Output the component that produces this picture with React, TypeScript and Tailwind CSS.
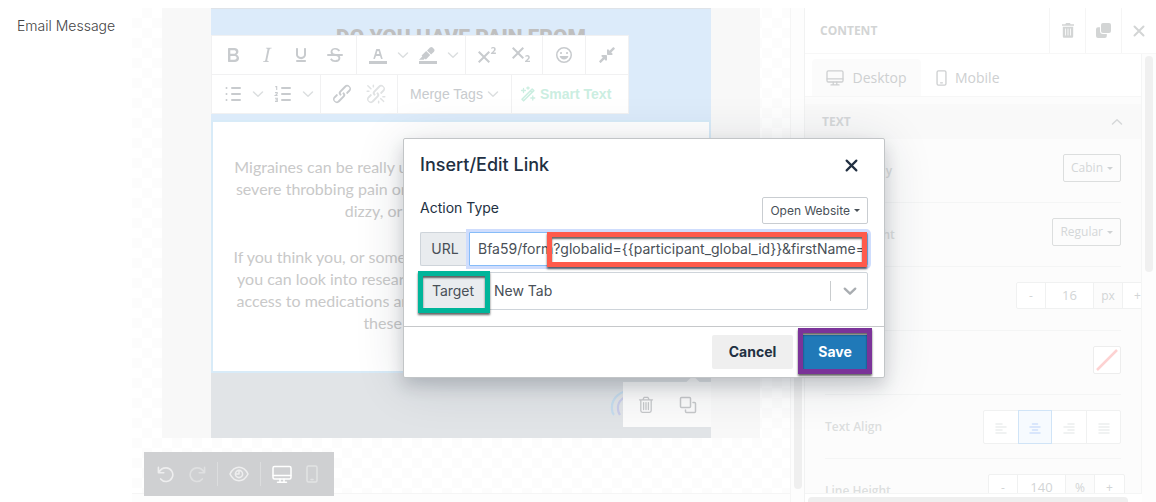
import React from "react";
import { FaCompressAlt } from "react-icons/fa";

type IconProps = { className?: string };

function Glyph({ d, className = "size-6" }: { d: string[]; className?: string }) {
  return (
    <svg viewBox="0 0 24 24" className={className} fill="currentColor" fillRule="evenodd" aria-hidden="true">
      {d.map((path) => (
        <path key={path} d={path} />
      ))}
    </svg>
  );
}

function Stroke({
  children,
  className = "size-6",
  box = "0 0 24 24",
  width = 1.5,
}: {
  children: React.ReactNode;
  className?: string;
  box?: string;
  width?: number;
}) {
  return (
    <svg
      viewBox={box}
      className={className}
      fill="none"
      stroke="currentColor"
      strokeWidth={width}
      strokeLinecap="round"
      strokeLinejoin="round"
      aria-hidden="true"
    >
      {children}
    </svg>
  );
}

const LINK_PATH =
  "M6.2 12.3a1 1 0 0 1 1.4 1.4l-2 2a2 2 0 1 0 2.6 2.8l4.8-4.8a1 1 0 0 0 0-1.4 1 1 0 1 1 1.4-1.3 2.9 2.9 0 0 1 0 4L9.6 20a3.9 3.9 0 0 1-5.5-5.5l2-2Zm11.6-.6a1 1 0 0 1-1.4-1.4l2-2a2 2 0 1 0-2.6-2.8L11 10.3a1 1 0 0 0 0 1.4A1 1 0 1 1 9.6 13a2.9 2.9 0 0 1 0-4L14.4 4a3.9 3.9 0 0 1 5.5 5.5l-2 2Z";

const GLYPHS = {
  bold: [
    "M7.8 19c-.3 0-.5 0-.6-.2l-.2-.5V5.7c0-.2 0-.4.2-.5l.6-.2h5c1.5 0 2.7.3 3.5 1 .7.6 1.1 1.4 1.1 2.5a3 3 0 0 1-.6 1.9c-.4.6-1 1-1.6 1.2.4.1.9.3 1.3.6s.8.7 1 1.2c.4.4.5 1 .5 1.6 0 1.3-.4 2.3-1.3 3-.8.7-2.1 1-3.8 1H7.8Zm5-8.3c.6 0 1.2-.1 1.6-.5.4-.3.6-.7.6-1.3 0-1.1-.8-1.7-2.3-1.7H9.3v3.5h3.4Zm.5 6c.7 0 1.3-.1 1.7-.4.4-.4.6-.9.6-1.5s-.2-1-.7-1.4c-.4-.3-1-.4-2-.4H9.4v3.8h4Z",
  ],
  italic: [
    "m16.7 4.7-.1.9h-.3c-.6 0-1 0-1.4.3-.3.3-.4.6-.5 1.1l-2.1 9.8v.6c0 .5.4.8 1.4.8h.2l-.2.8H8l.2-.8h.2c1.1 0 1.8-.5 2-1.5l2-9.8.1-.5c0-.6-.4-.8-1.4-.8h-.3l.2-.9h5.8Z",
  ],
  underline: [
    "M16 5c.6 0 1 .4 1 1v5.5a4 4 0 0 1-.4 1.8l-1 1.4a5.3 5.3 0 0 1-5.5 1 5 5 0 0 1-1.6-1c-.5-.4-.8-.9-1.1-1.4a4 4 0 0 1-.4-1.8V6c0-.6.4-1 1-1s1 .4 1 1v5.5c0 .3 0 .6.2 1l.6.7a3.3 3.3 0 0 0 2.2.8 3.4 3.4 0 0 0 2.2-.8c.3-.2.4-.5.6-.8l.2-.9V6c0-.6.4-1 1-1ZM8 17h8c.6 0 1 .4 1 1s-.4 1-1 1H8a1 1 0 0 1 0-2Z",
  ],
  strike: [
    "M15.6 8.5c-.5-.7-1-1.1-1.3-1.3-.6-.4-1.3-.6-2-.6-2.7 0-2.8 1.7-2.8 2.1 0 1.6 1.8 2 3.2 2.3 4.4.9 4.6 2.8 4.6 3.9 0 1.4-.7 4.1-5 4.1A6.2 6.2 0 0 1 7 16.4l1.5-1.1c.4.6 1.6 2 3.7 2 1.6 0 2.5-.4 3-1.2.4-.8.3-2-.8-2.6-.7-.4-1.6-.7-2.9-1-1-.2-3.9-.8-3.9-3.6C7.6 6 10.3 5 12.4 5c2.9 0 4.2 1.6 4.7 2.4l-1.5 1.1Z",
    "M5 11h14a1 1 0 0 1 0 2H5a1 1 0 0 1 0-2Z",
  ],
  textColor: [
    "M3 18h18v3H3z",
    "M8.7 16h-.8a.5.5 0 0 1-.5-.6l2.7-9c.1-.3.3-.4.5-.4h2.8c.2 0 .4.1.5.4l2.7 9a.5.5 0 0 1-.5.6h-.8a.5.5 0 0 1-.4-.4l-.7-2.2c0-.3-.3-.4-.5-.4h-3.4c-.2 0-.4.1-.5.4l-.7 2.2c0 .3-.2.4-.4.4Zm2.6-7.6-.6 2a.5.5 0 0 0 .5.6h1.6a.5.5 0 0 0 .5-.6l-.6-2c0-.3-.3-.4-.5-.4h-.4c-.2 0-.4.1-.5.4Z",
  ],
  highlight: [
    "M3 18h18v3H3z",
    "M7.7 16.7H3l3.3-3.3-.7-.8L10.2 8l4 4.1-4 4.2c-.2.2-.6.2-.8 0l-.6-.7-1.1 1.1zm5-7.5L11 7.4l3-2.9a2 2 0 0 1 2.6 0L18 6c.7.7.7 2 0 2.7l-2.9 2.9-1.8-1.8-.5-.6",
  ],
  superscript: [
    "M15 9.4 10.4 14l4.6 4.6-1.4 1.4L9 15.4 4.4 20 3 18.6 7.6 14 3 9.4 4.4 8 9 12.6 13.6 8 15 9.4Zm5.9 1.6h-5v-1l1-.8 1.7-1.6c.3-.5.5-.9.5-1.3 0-.3 0-.5-.2-.7-.2-.2-.5-.3-.9-.3l-.8.2-.7.4-.4-1.2c.2-.2.5-.4 1-.5.3-.2.8-.2 1.2-.2.8 0 1.4.2 1.8.6.4.4.6 1 .6 1.6 0 .5-.2 1-.5 1.5l-1.3 1.4-.6.5h2.6V11Z",
  ],
  subscript: [
    "m10.4 10 4.6 4.6-1.4 1.4L9 11.4 4.4 16 3 14.6 7.6 10 3 5.4 4.4 4 9 8.6 13.6 4 15 5.4 10.4 10ZM21 19h-5v-1l1-.8 1.7-1.6c.3-.4.5-.8.5-1.2 0-.3 0-.6-.2-.7-.2-.2-.5-.3-.9-.3a2 2 0 0 0-.8.2l-.7.3-.4-1.1 1-.6 1.2-.2c.8 0 1.4.3 1.8.7.4.4.6.9.6 1.5s-.2 1.1-.5 1.6a8 8 0 0 1-1.3 1.3l-.6.6h2.6V19Z",
  ],
  emoji: [
    "M9 11c.6 0 1-.4 1-1s-.4-1-1-1a1 1 0 0 0-1 1c0 .6.4 1 1 1Zm6 0c.6 0 1-.4 1-1s-.4-1-1-1a1 1 0 0 0-1 1c0 .6.4 1 1 1Zm-3 5.5c2.1 0 4-1.5 4.4-3.5H7.6c.5 2 2.3 3.5 4.4 3.5ZM12 4a8 8 0 1 0 0 16 8 8 0 0 0 0-16Zm0 14.5a6.5 6.5 0 1 1 0-13 6.5 6.5 0 0 1 0 13Z",
  ],
  link: [LINK_PATH],
  unlink: [
    LINK_PATH,
    "M7.6 6.3a.8.8 0 0 1-1 1.1L3.3 4.2a.7.7 0 1 1 1-1l3.2 3.1ZM5.1 8.6a.8.8 0 0 1 0 1.5H3a.8.8 0 0 1 0-1.5H5Zm5-3.5a.8.8 0 0 1-1.5 0V3a.8.8 0 0 1 1.5 0V5Zm6 11.8a.8.8 0 0 1 1-1l3.2 3.2a.8.8 0 0 1-1 1L16 17Zm-2.2 2a.8.8 0 0 1 1.5 0V21a.8.8 0 0 1-1.5 0V19Zm5-3.5a.7.7 0 1 1 0-1.5H21a.8.8 0 0 1 0 1.5H19Z",
  ],
};

function Chevron({ className = "size-3" }: IconProps) {
  return (
    <Stroke box="0 0 12 12" className={className}>
      <path d="M1.5 4 6 8.3 10.5 4" />
    </Stroke>
  );
}

function BulletList() {
  return (
    <Stroke width={2}>
      <path d="M11 6h8M11 12h8M11 18h8M5.5 6h.01M5.5 12h.01M5.5 18h.01" />
    </Stroke>
  );
}

function NumberList() {
  return (
    <svg viewBox="0 0 24 24" className="size-6" fill="none" stroke="currentColor" aria-hidden="true">
      <path d="M11 6h8M11 12h8M11 18h8" strokeWidth="2" strokeLinecap="round" />
      <path d="M4.3 4.6h1.4V8M4 10.6h2.2v1.2L4.3 13.5h2.3M4 16.2h2.3v3.2H4M4.6 17.8h1.7" strokeWidth="1.1" />
    </svg>
  );
}

function Wand() {
  return (
    <Stroke box="0 0 16 16" className="size-4" width={1.6}>
      <path d="M2 13.2 12.2 3l1.6 1.6L3.6 14.8ZM10.4 4.8 12 6.4" />
      <path d="M3.5 2.5v4M1.5 4.5h4M8 .8v2.4M6.8 2h2.4M12.8 10v4M10.8 12h4" strokeWidth="1.3" />
    </Stroke>
  );
}

function TrashOutline() {
  return (
    <Stroke box="0 0 16 18" className="h-[18px] w-4" width={1.3}>
      <path d="M1.5 3.8h13M5 3.6 6 1.4h4l1 2.2M2.8 4v10.6c0 1 .6 1.7 1.6 1.7h7.2c1 0 1.6-.7 1.6-1.7V4M5.6 6.6v7M8 6.6v7M10.4 6.6v7" />
    </Stroke>
  );
}

function CopyOutline() {
  return (
    <Stroke box="0 0 18 18" className="size-[18px]" width={1.5}>
      <rect x="1.5" y="1.5" width="10" height="10" rx="1" />
      <path d="M14 6.5h1.5a1 1 0 0 1 1 1v8a1 1 0 0 1-1 1h-8a1 1 0 0 1-1-1V14" />
    </Stroke>
  );
}

function TrashSolid() {
  return (
    <svg viewBox="0 0 12 15" className="h-[15px] w-3" fill="currentColor" fillRule="evenodd" aria-hidden="true">
      <path d="M4 0h4l.6 1.2H12v1.6H0V1.2h3.4ZM.8 3.8h10.4v9.4c0 1-.6 1.6-1.6 1.6H2.4c-1 0-1.6-.6-1.6-1.6ZM3 5.6v7h.8v-7Zm2.6 0v7h.8v-7Zm2.6 0v7H9v-7Z" />
    </svg>
  );
}

function CopySolid() {
  return (
    <svg viewBox="0 0 15 15" className="size-[15px]" fill="currentColor" aria-hidden="true">
      <rect x="5" y="0" width="10" height="10" rx="2" />
      <path d="M4 4.2H2a2 2 0 0 0-2 2V13a2 2 0 0 0 2 2h6.800a2 2 0 0 0 2-2v-2H7a3 3 0 0 1-3-3Z" />
    </svg>
  );
}

function Close({ className = "size-3", width = 2 }: IconProps & { width?: number }) {
  return (
    <Stroke box="0 0 12 12" className={className} width={width}>
      <path d="m1.500 1.500 9 9M10.500 1.500l-9 9" />
    </Stroke>
  );
}

function Desktop({ className = "h-[18px] w-5" }: IconProps) {
  return (
    <Stroke box="0 0 20 18" className={className} width={1.5}>
      <rect x="1" y="1" width="18" height="12.500" rx="1.5" />
      <path d="M1.200 10h17.600M8 13.600v3M12 13.600v3M5.500 16.800h9" />
    </Stroke>
  );
}

function Mobile({ className = "h-[18px] w-3" }: IconProps) {
  return (
    <Stroke box="0 0 12 18" className={className} width={1.5}>
      <rect x="1" y="1" width="10" height="16" rx="1.5" />
      <path d="M5 14.400h2" />
    </Stroke>
  );
}

function Rotate({ className = "size-[18px]" }: IconProps) {
  return (
    <Stroke box="0 0 18 18" className={className} width={1.7}>
      <path d="M1.500 1.500v5.700h5.700M1.800 7C3.500 3.600 6.200 2 9.600 2a7.200 7.200 0 1 1-5.700 11.700" />
    </Stroke>
  );
}

function Eye() {
  return (
    <Stroke box="0 0 20 16" className="h-4 w-5" width={1.6}>
      <path d="M1 8c2.200-4.400 5.200-6.700 9-6.700S16.800 3.600 19 8c-2.200 4.400-5.200 6.700-9 6.700S3.200 12.400 1 8Z" />
      <circle cx="10" cy="8" r="3.600" />
      <path d="M10 4.500V8H7" />
    </Stroke>
  );
}

function Tool({ label, children, faint = false }: { label: string; children: React.ReactNode; faint?: boolean }) {
  return (
    <button
      type="button"
      aria-label={label}
      className={`flex h-[34px] w-[34px] items-center justify-center ${faint ? "text-[#e0e2e3]" : "text-[#c8cbce]"}`}
    >
      {children}
    </button>
  );
}

function Drop({ label }: { label: string }) {
  return (
    <button type="button" aria-label={label} className="flex h-[34px] w-4 items-center justify-center text-[#dcdfe0]">
      <Chevron />
    </button>
  );
}

function Segment({ children, grow = false }: { children: React.ReactNode; grow?: boolean }) {
  return (
    <div className={`flex h-[39px] items-center border-b border-l border-[#f1f1f2] px-1 ${grow ? "flex-1" : ""}`}>
      {children}
    </div>
  );
}

function TextToolbar() {
  return (
    <div className="absolute top-[26px] left-0 w-[418px] border-t border-r border-[#f1f1f2] bg-white">
      <div className="flex">
        <Segment>
          <Tool label="Bold"><Glyph d={GLYPHS.bold} /></Tool>
          <Tool label="Italic"><Glyph d={GLYPHS.italic} /></Tool>
          <Tool label="Underline"><Glyph d={GLYPHS.underline} /></Tool>
          <Tool label="Strikethrough"><Glyph d={GLYPHS.strike} /></Tool>
        </Segment>
        <Segment>
          <Tool label="Text color"><Glyph d={GLYPHS.textColor} /></Tool>
          <Drop label="Text color options" />
          <Tool label="Highlight"><Glyph d={GLYPHS.highlight} /></Tool>
          <Drop label="Highlight options" />
        </Segment>
        <Segment>
          <Tool label="Superscript"><Glyph d={GLYPHS.superscript} /></Tool>
          <Tool label="Subscript"><Glyph d={GLYPHS.subscript} /></Tool>
        </Segment>
        <Segment>
          <Tool label="Emoji"><Glyph d={GLYPHS.emoji} /></Tool>
        </Segment>
        <Segment grow>
          <Tool label="Collapse"><FaCompressAlt className="size-[18px]" /></Tool>
        </Segment>
      </div>
      <div className="flex font-['Liberation_Sans',sans-serif] text-sm">
        <Segment>
          <Tool label="Bulleted list"><BulletList /></Tool>
          <Drop label="Bulleted list options" />
          <Tool label="Numbered list"><NumberList /></Tool>
          <Drop label="Numbered list options" />
        </Segment>
        <Segment>
          <Tool label="Link"><Glyph d={GLYPHS.link} /></Tool>
          <Tool label="Unlink" faint><Glyph d={GLYPHS.unlink} /></Tool>
        </Segment>
        <Segment>
          <button type="button" className="flex w-[105px] items-center justify-between px-2 text-[#c8cbce]">
            Merge Tags
            <Chevron className="size-3 text-[#dcdfe0]" />
          </button>
        </Segment>
        <Segment grow>
          <button type="button" className="flex items-center gap-1 px-1 font-bold text-[#cbeee1]">
            <Wand />
            Smart Text
          </button>
        </Segment>
      </div>
    </div>
  );
}

function EmailCanvas() {
  return (
    <main className="relative min-w-0 flex-1 bg-[repeating-conic-gradient(#fcfcfc_0_25%,#ffffff_0_50%)] bg-[length:20px_20px]">
      <div className="mx-[30px] flex justify-center bg-[#f8f8f8]">
        <div className="relative w-[500px] shrink-0 border-t border-[#dfe3e8] bg-[#dcebfa] font-['Lato',sans-serif] text-base text-[#c9c9c9]">
          <h2 className="flex h-[111px] justify-center pt-4 font-['Roboto',sans-serif] text-[21px] leading-6 font-black text-[#bfbfbf]">
            DO YOU HAVE PAIN FROM
          </h2>
          <TextToolbar />
          <div className="flex h-[253px] flex-col gap-6 border-2 border-[#d8ebf8] bg-white pt-[34px] text-center leading-[22px] whitespace-nowrap">
            <p>
              Migraines can be really unpleasant and they often may cause you
              <br />
              severe throbbing pain or pulsing, making you feel nauseous, sick,
              <br />
              dizzy, or sensitive to bright lights.
            </p>
            <p>
              If you think you, or someone whom you know, suffers from them,
              <br />
              you can look into research studies. Volunteers often also receive
              <br />
              access to medications and care at no cost, through taking part in
              <br />
              these studies near your city.
            </p>
          </div>
          <div className="relative h-[65px] bg-[#e1e4e7]">
            <svg viewBox="0 0 30 30" className="absolute top-4 right-[72px] size-[30px]" fill="none" strokeWidth="2.2" aria-hidden="true">
              <path d="M26 2C12 0 2 9 3 20c0 3 1 5 2 6" stroke="#c5dcee" />
              <path d="M27 6C15 5 8 13 9 20c0 3 1 4 2 6" stroke="#c9cdea" />
              <path d="M28 11c-8 0-13 5-13 10 0 2 0 3 1 5" stroke="#d3cbe4" />
            </svg>
            <div className="absolute top-[9px] right-0 flex h-[45px] w-[88px] items-center justify-center gap-[25px] bg-[#fbfbfb] text-[#c6c8ca]">
              <span className="absolute -top-1 right-3 size-3 rotate-45 bg-[#fbfbfb]" />
              <button type="button" aria-label="Delete block" className="relative"><TrashOutline /></button>
              <button type="button" aria-label="Duplicate block" className="relative"><CopyOutline /></button>
            </div>
          </div>
        </div>
      </div>
      <div className="absolute right-0 bottom-0 left-0 h-[9px] border-t border-[#f5f5f5] bg-[#fdfdfd]" />
      <div className="absolute bottom-1.5 left-3 flex h-11 w-[190px] items-center bg-[#cfd0d2] text-[#eeeeef]">
        <button type="button" aria-label="Undo" className="flex w-[42px] justify-center"><Rotate className="size-[17px]" /></button>
        <button type="button" aria-label="Redo" className="flex w-[22px] justify-center text-[#dfe0e1]"><Rotate className="size-[17px] -scale-x-100" /></button>
        <span className="ml-[9px] h-6 w-px bg-[#dcddde]" />
        <button type="button" aria-label="Preview" className="flex w-[42px] justify-center"><Eye /></button>
        <span className="h-6 w-px bg-[#dcddde]" />
        <button type="button" aria-label="Desktop view" className="flex w-[42px] justify-center text-white"><Desktop className="h-[19px] w-5" /></button>
        <button type="button" aria-label="Mobile view" className="flex w-[18px] justify-center text-[#e2e3e4]"><Mobile className="h-[18px] w-[14px]" /></button>
      </div>
    </main>
  );
}

function Field({ label, children, last = false }: { label: string; children: React.ReactNode; last?: boolean }) {
  return (
    <div className={`flex h-16 shrink-0 items-start justify-between pt-[15px] ${last ? "" : "border-b border-[#f4f5f5]"}`}>
      <span className="leading-[34px] font-semibold text-[#dcdfdf]">{label}</span>
      {children}
    </div>
  );
}

function PanelDropdown({ value }: { value: string }) {
  return (
    <button type="button" className="flex h-7 items-center gap-1 rounded-xs border border-[#dcdede] px-[7px] text-[#d4d7d8]">
      {value}
      <span className="border-x-3 border-t-3 border-x-transparent border-t-[#cfd2d3]" />
    </button>
  );
}

function Stepper({ label, value, unit }: { label: string; value: string; unit: string }) {
  return (
    <div className="flex h-[27px] rounded-xs border border-[#f0f1f1] bg-white text-[#d2d5d6]">
      <button type="button" aria-label={`Decrease ${label}`} className="w-7">-</button>
      <input aria-label={label} defaultValue={value} className="w-[49px] border-x border-[#f0f1f1] text-center text-[13px] outline-none" />
      <span className="flex w-7 items-center justify-center bg-[#fcfcfc]">{unit}</span>
      <button type="button" aria-label={`Increase ${label}`} className="w-[30px] border-l border-[#f0f1f1]">+</button>
    </div>
  );
}

const ALIGNMENTS = [
  { name: "Left", d: "M1 1h6M1 4h10M1 7h6M1 10h10" },
  { name: "Center", d: "M3.500 1h5M1 4h10M3.500 7h5M1 10h10" },
  { name: "Right", d: "M5 1h6M1 4h10M5 7h6M1 10h10" },
  { name: "Justify", d: "M1 1h10M1 4h10M1 7h10M1 10h10" },
];

function PropertyPanel() {
  return (
    <aside className="flex w-[352px] shrink-0 flex-col border-l border-[#f1f2f2] bg-white font-['Open_Sans',sans-serif] text-xs">
      <header className="flex h-[46px] shrink-0 items-stretch border-b border-[#f7f7f7] text-[#d3d5d5]">
        <h2 className="flex flex-1 items-center pl-[15px] font-bold">CONTENT</h2>
        <button type="button" aria-label="Delete" className="flex w-9 items-center justify-center border-l border-[#f5f5f5]"><TrashSolid /></button>
        <button type="button" aria-label="Duplicate" className="flex w-9 items-center justify-center border-l border-[#f5f5f5]"><CopySolid /></button>
        <button type="button" aria-label="Close panel" className="flex w-[35px] items-center justify-center border-l border-[#f5f5f5]"><Close /></button>
      </header>
      <div className="flex min-h-0 flex-1">
        <div className="flex min-w-0 flex-1 flex-col">
          <div className="flex min-h-0 flex-1 flex-col overflow-hidden border-r border-b border-[#f4f5f5] bg-[#fcfcfc]">
            <div className="flex h-[43px] shrink-0 items-end border-b border-[#f6f6f6] bg-white px-[7px] text-sm text-[#ced0d1]">
              <button type="button" className="flex h-[37px] w-[109px] items-center justify-center gap-2 rounded-t bg-[#fbfbfb]"><Desktop className="h-4 w-[18px]" />Desktop</button>
              <button type="button" className="flex h-[37px] items-center gap-2 px-[15px]"><Mobile className="h-4 w-[11px]" />Mobile</button>
            </div>
            <div className="mt-[7px] flex h-[35px] shrink-0 items-center justify-between bg-[#f9f9f9] pr-[18px] pl-[17px] font-bold text-[#d6d8d9]">
              TEXT
              <Chevron className="size-3 rotate-180" />
            </div>
            <div className="flex flex-col pr-5 pl-5">
              <Field label="Font Family"><PanelDropdown value="Cabin" /></Field>
              <Field label="Font Weight"><PanelDropdown value="Regular" /></Field>
              <Field label="Font Size">
                <div className="-mr-8 shrink-0"><Stepper label="Font size" value="16" unit="px" /></div>
              </Field>
              <Field label="Color">
                <button type="button" aria-label="Text color value" className="flex size-7 items-center justify-center rounded-xs border border-[#ededed] bg-white">
                  <svg viewBox="0 0 22 22" className="size-[22px]" aria-hidden="true"><path d="M1 21 21 1" stroke="#fdd2d2" strokeWidth="2.500" /></svg>
                </button>
              </Field>
              <Field label="Text Align">
                <div className="flex h-[34px] rounded-xs border border-[#f0f1f1] bg-white">
                  {ALIGNMENTS.map(({ name, d }) => (
                    <button
                      key={name}
                      type="button"
                      aria-label={name}
                      className={`-my-px flex w-[34px] items-center justify-center ${
                        name === "Center" ? "border border-[#d0e4f7] bg-[#f6fafe] text-[#cfe0fb]" : "text-[#eceeee]"
                      } ${name === "Justify" ? "border-l border-[#f0f1f1]" : ""}`}
                    >
                      <svg viewBox="0 0 12 12" className="mt-1 size-3" fill="none" stroke="currentColor" strokeWidth="1.500" strokeLinecap="round" aria-hidden="true"><path d={d} /></svg>
                    </button>
                  ))}
                </div>
              </Field>
              <Field label="Line Height" last>
                <div className="-mr-1 shrink-0"><Stepper label="Line height" value="140" unit="%" /></div>
              </Field>
            </div>
          </div>
          <div className="mt-[3px] mr-[14px] ml-[3px] h-[5px] shrink-0 rounded-t bg-[#efefef]" />
        </div>
        <div className="w-[14px] shrink-0 bg-[#fdfdfd] pt-0.5 pl-[3px]">
          <div className="h-[216px] w-2 rounded-full bg-[#f0f0f0]" />
        </div>
      </div>
    </aside>
  );
}

function LinkDialog() {
  return (
    <div
      role="dialog"
      aria-labelledby="link-title"
      className="w-[482px] rounded-xs border border-[#c2c5c7] bg-white font-['Inter',sans-serif] text-sm text-[#223042] shadow-[0_8px_16px_rgba(30,40,55,0.18),0_6px_50px_rgba(30,40,55,0.14)]"
    >
      <div className="flex h-[52px] items-center justify-between px-4">
        <h1 id="link-title" className="text-lg font-medium">Insert/Edit Link</h1>
        <button type="button" aria-label="Close" className="mr-2.5"><Close className="size-[13px]" width={2} /></button>
      </div>
      <form className="flex flex-col px-4 pt-1.5 pb-4" onSubmit={(e) => e.preventDefault()}>
        <div className="mb-2 flex h-[27px] items-center justify-between">
          <span className="pb-1.5">Action Type</span>
          <button type="button" className="flex h-[27px] items-center gap-1 rounded-xs border border-[#c9cdd1] px-[7px] text-xs text-[#495057]">
            Open Website
            <span className="border-x-3 border-t-3 border-x-transparent border-t-[#495057]" />
          </button>
        </div>
        <div className="relative mb-1.5 flex h-[34px] text-[#495057]">
          <label htmlFor="url" className="flex w-[49px] items-center justify-center rounded-l-xs border border-r-0 border-[#ced4da] bg-[#e9ecef]">URL</label>
          <input
            id="url"
            type="text"
            defaultValue="Bfa59/form?globalid={{participant_global_id}}&firstName="
            className="min-w-0 flex-1 rounded-r-xs border border-[#86bcf8] pl-2 shadow-[0_0_0_3px_#cfddfd] outline-none"
          />
          <span className="pointer-events-none absolute top-0 right-px h-[35px] w-80 border-5 border-[#ff5a4b] shadow-[0_2px_2px_rgba(0,0,0,0.6),inset_0_2px_2px_rgba(0,0,0,0.6)]" />
        </div>
        <div className="relative flex h-[38px] text-[#495057]">
          <label htmlFor="target" className="flex w-[65px] items-center justify-center rounded-l-xs border border-r-0 border-[#ced4da] bg-[#e9ecef]">Target</label>
          <select id="target" className="min-w-0 flex-1 appearance-none rounded-r-xs border border-[#ced4da] bg-white px-2 outline-none">
            <option>New Tab</option>
          </select>
          <span className="pointer-events-none absolute top-0 right-0 flex h-full w-[38px] items-center text-[#a9adb1]">
            <span className="h-5 w-px bg-[#c9ccce]" />
            <Stroke box="0 0 12 12" className="mx-auto size-[14px]" width={2}><path d="M1.500 4 6 8.300 10.500 4" /></Stroke>
          </span>
          <span className="pointer-events-none absolute -top-px -left-0.5 h-[42px] w-[72px] border-5 border-[#00b59a] shadow-[0_2px_2px_rgba(0,0,0,0.6),inset_0_2px_2px_rgba(0,0,0,0.6)]" />
        </div>
      </form>
      <div className="flex h-[51px] items-center justify-end gap-2.5 border-t border-[#c6c8ca] pr-[17px] font-bold">
        <button type="button" className="h-[34px] w-[81px] rounded-xs bg-[#efefef]">Cancel</button>
        <div className="relative">
          <button type="submit" className="h-[34px] w-16 bg-[#2079b8] text-white">Save</button>
          <span className="pointer-events-none absolute -inset-x-[5px] -top-[7px] h-[46px] border-5 border-[#7b3399] shadow-[0_2px_2px_rgba(0,0,0,0.6),inset_0_2px_2px_rgba(0,0,0,0.6)]" />
        </div>
      </div>
    </div>
  );
}

export default function App() {
  return (
    <div className="flex h-screen overflow-hidden bg-white pt-2">
      <div className="w-[132px] shrink-0 pt-2 pl-[17px] font-['Inter',sans-serif] text-sm font-light text-[#444444]">
        Email Message
      </div>
      <div className="relative flex min-w-0 flex-1">
        <EmailCanvas />
        <div className="flex w-[14px] shrink-0 flex-col items-center border-l border-[#f5f5f5] bg-[#fdfdfd] pt-40 pb-[13px]">
          <div className="w-2 flex-1 rounded-full bg-[#efefef]" />
        </div>
        <PropertyPanel />
        <div className="pointer-events-none absolute inset-0 flex items-start justify-center pt-[130px]">
          <div className="pointer-events-auto">
            <LinkDialog />
          </div>
        </div>
      </div>
    </div>
  );
}
